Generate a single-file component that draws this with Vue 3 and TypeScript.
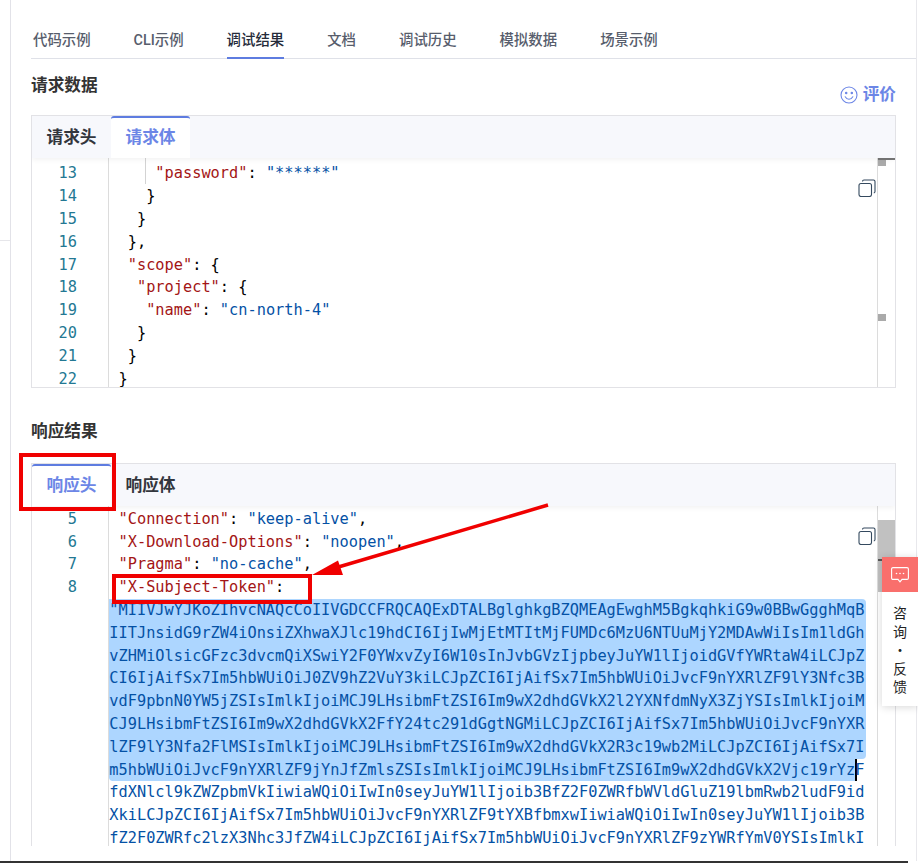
<script setup lang="ts">
interface Seg { t: string; c: string }
const mainTabs: string[] = ['代码示例', 'CLI示例', '调试结果', '文档', '调试历史', '模拟数据', '场景示例']
const seg = (t: string, c = 'p'): Seg => ({ t, c })
const reqLines: Seg[][] = [
  [seg('     '), seg('"password"', 'k'), seg(': '), seg('"******"', 'v')],
  [seg('    }')],
  [seg('   }')],
  [seg('  },')],
  [seg('  '), seg('"scope"', 'k'), seg(': {')],
  [seg('   '), seg('"project"', 'k'), seg(': {')],
  [seg('    '), seg('"name"', 'k'), seg(': '), seg('"cn-north-4"', 'v')],
  [seg('   }')],
  [seg('  }')],
  [seg(' }')]
]
const resLines: Seg[][] = [
  [seg(' '), seg('"Connection"', 'k'), seg(': '), seg('"keep-alive"', 'v'), seg(',')],
  [seg(' '), seg('"X-Download-Options"', 'k'), seg(': '), seg('"noopen"', 'v'), seg(',')],
  [seg(' '), seg('"Pragma"', 'k'), seg(': '), seg('"no-cache"', 'v'), seg(',')],
  [seg(' '), seg('"X-Subject-Token"', 'k'), seg(':')]
]
const selected: string[] = [
  '"MIIVJwYJKoZIhvcNAQcCoIIVGDCCFRQCAQExDTALBglghkgBZQMEAgEwghM5BgkqhkiG9w0BBwGgghMqB',
  'IITJnsidG9rZW4iOnsiZXhwaXJlc19hdCI6IjIwMjEtMTItMjFUMDc6MzU6NTUuMjY2MDAwWiIsIm1ldGh',
  'vZHMiOlsicGFzc3dvcmQiXSwiY2F0YWxvZyI6W10sInJvbGVzIjpbeyJuYW1lIjoidGVfYWRtaW4iLCJpZ',
  'CI6IjAifSx7Im5hbWUiOiJ0ZV9hZ2VuY3kiLCJpZCI6IjAifSx7Im5hbWUiOiJvcF9nYXRlZF9lY3Nfc3B',
  'vdF9pbnN0YW5jZSIsImlkIjoiMCJ9LHsibmFtZSI6Im9wX2dhdGVkX2l2YXNfdmNyX3ZjYSIsImlkIjoiM',
  'CJ9LHsibmFtZSI6Im9wX2dhdGVkX2FfY24tc291dGgtNGMiLCJpZCI6IjAifSx7Im5hbWUiOiJvcF9nYXR',
  'lZF9lY3Nfa2FlMSIsImlkIjoiMCJ9LHsibmFtZSI6Im9wX2dhdGVkX2R3c19wb2MiLCJpZCI6IjAifSx7I'
]
const selLast = 'm5hbWUiOiJvcF9nYXRlZF9jYnJfZmlsZSIsImlkIjoiMCJ9LHsibmFtZSI6Im9wX2dhdGVkX2Vjc19rYz'
const rest: string[] = [
  'fdXNlcl9kZWZpbmVkIiwiaWQiOiIwIn0seyJuYW1lIjoib3BfZ2F0ZWRfbWVldGluZ19lbmRwb2ludF9id',
  'XkiLCJpZCI6IjAifSx7Im5hbWUiOiJvcF9nYXRlZF9tYXBfbmxwIiwiaWQiOiIwIn0seyJuYW1lIjoib3B',
  'fZ2F0ZWRfc2lzX3Nhc3JfZW4iLCJpZCI6IjAifSx7Im5hbWUiOiJvcF9nYXRlZF9zYWRfYmV0YSIsImlkI'
]
const feedback: string[] = ['咨', '询', '•', '反', '馈']
</script>

<template>
  <div class="page">
    <div class="rail"></div>
    <main class="main">
      <nav class="tabs">
        <span v-for="(t, i) in mainTabs" :key="t" class="tab" :class="{ on: i === 2 }">{{ t }}</span>
      </nav>

      <div class="title-row first">
        <h2 class="title">请求数据</h2>
        <span class="rate">
          <svg width="18" height="18" viewBox="0 0 18 18" fill="none" stroke="#6c86e6" stroke-width="1.1">
            <circle cx="9" cy="9" r="8" />
            <circle cx="6.2" cy="7" r=".7" fill="#6c86e6" />
            <circle cx="11.8" cy="7" r=".7" fill="#6c86e6" />
            <path d="M5.2 10.8c1 1.7 2.3 2.5 3.8 2.5s2.800-.8 3.800-2.500" stroke-linecap="round" />
          </svg>
          评价
        </span>
      </div>

      <section class="panel req">
        <header class="panel-head">
          <span class="ptab">请求头</span>
          <span class="ptab on">请求体</span>
        </header>
        <div class="panel-body">
          <div class="gutter">
            <div v-for="n in 10" :key="n" class="num">{{ n + 12 }}</div>
          </div>
          <div class="code">
            <i class="guide"></i>
            <div v-for="(l, i) in reqLines" :key="i" class="line">
              <span v-for="(s, j) in l" :key="j" :class="s.c">{{ s.t }}</span>
            </div>
          </div>
          <svg class="copy" width="18" height="18" viewBox="0 0 18 18" fill="none" stroke="#34495e" stroke-width="1.1">
            <rect x="1" y="4.500" width="12.500" height="13" rx="2" />
            <path d="M4.500 2.500c0-.9.6-1.500 1.500-1.500h9.500c.9 0 1.500.6 1.500 1.500v10c0 .8-.4 1.300-1.200 1.500" />
          </svg>
          <div class="scroll">
            <i class="scroll-top"></i>
            <i class="mark m1"></i>
            <i class="mark m2"></i>
          </div>
        </div>
      </section>

      <div class="title-row second">
        <h2 class="title">响应结果</h2>
      </div>

      <section class="panel res">
        <header class="panel-head">
          <span class="ptab on">响应头</span>
          <span class="ptab">响应体</span>
        </header>
        <div class="panel-body">
          <div class="gutter">
            <div v-for="n in 4" :key="n" class="num">{{ n + 4 }}</div>
          </div>
          <div class="code">
            <div v-for="(l, i) in resLines" :key="i" class="line">
              <span v-for="(s, j) in l" :key="j" :class="s.c">{{ s.t }}</span>
            </div>
            <div
              v-for="(l, i) in selected"
              :key="l"
              class="line tok sel"
              :class="{ first: i === 0, end: i === selected.length - 1 }"
            >{{ l }}</div>
            <div class="line tok"><span class="sel-last">{{ selLast }}</span>F</div>
            <div v-for="l in rest" :key="l" class="line tok">{{ l }}</div>
          </div>
          <svg class="copy" width="18" height="18" viewBox="0 0 18 18" fill="none" stroke="#34495e" stroke-width="1.1">
            <rect x="1" y="4.500" width="12.500" height="13" rx="2" />
            <path d="M4.500 2.500c0-.9.6-1.500 1.500-1.500h9.500c.9 0 1.500.6 1.500 1.500v10c0 .8-.4 1.300-1.200 1.500" />
          </svg>
          <div class="scroll">
            <i class="thumb"></i>
            <i class="thumb-mark"></i>
          </div>
        </div>
      </section>
    </main>
    <div class="foot"></div>

    <aside class="float">
      <div class="float-icon">
        <svg width="18" height="16" viewBox="0 0 18 16" fill="none" stroke="#fff" stroke-width="1.100">
          <path d="M2 .6h14c.8 0 1.400.6 1.400 1.400v9c0 .8-.6 1.400-1.400 1.400h-5L9 14.800 7 12.400H2c-.8 0-1.400-.6-1.400-1.400V2C.6 1.200 1.200.6 2 .6z" />
          <circle cx="5.500" cy="6.500" r=".8" fill="#fff" stroke="none" />
          <circle cx="9" cy="6.500" r=".8" fill="#fff" stroke="none" />
          <circle cx="12.500" cy="6.500" r=".8" fill="#fff" stroke="none" />
        </svg>
      </div>
      <div class="float-text">
        <span v-for="(c, i) in feedback" :key="i">{{ c }}</span>
      </div>
    </aside>

    <i class="box box-a"></i>
    <i class="box box-b"></i>
    <svg class="arrow" width="918" height="863" viewBox="0 0 918 863">
      <path d="M548 505L335 568" stroke="#f00000" stroke-width="3.500" fill="none" />
      <path d="M312 575L338 560.500L343 575z" fill="#f00000" />
    </svg>
  </div>
</template>

<style>
html, body { margin: 0; background: #fff; }
</style>

<style scoped>
.page {
  position: relative;
  width: 918px;
  height: 863px;
  overflow: hidden;
  background: #fff;
  display: flex;
  flex-wrap: wrap;
  font-family: Roboto, "Noto Sans CJK SC", sans-serif;
}
.rail {
  width: 10px;
  height: 240px;
  border-bottom: 1px solid #e6e6ea;
  box-sizing: content-box;
}
.main {
  width: 907px;
  height: 861px;
  box-sizing: border-box;
  border-left: 1px solid #e2e2e8;
  border-right: 1px solid #e8e8ec;
  padding-left: 20px;
  overflow: hidden;
}
.foot {
  width: 908px;
  height: 2px;
  background: #333;
}
.tabs {
  display: flex;
  gap: 43px;
  height: 59px;
  box-sizing: border-box;
  padding-left: 2px;
  border-bottom: 1px solid #dfe1e8;
}
.tab {
  height: 59px;
  box-sizing: border-box;
  padding-top: 32px;
  font-size: 14.400px;
  line-height: 18px;
  font-weight: 500;
  color: #575d6c;
  white-space: nowrap;
}
.tab.on {
  color: #252b3a;
  border-bottom: 2px solid #5e7ce0;
}
.title-row {
  width: 865px;
  display: flex;
  justify-content: space-between;
}
.title-row.first { height: 56px; padding-top: 17px; box-sizing: border-box; }
.title-row.second { height: 75px; padding-top: 34px; box-sizing: border-box; }
.title {
  margin: 0;
  font-size: 16.700px;
  line-height: 20px;
  font-weight: 700;
  color: #333;
}
.rate {
  align-self: flex-end;
  margin-bottom: 10px;
  display: flex;
  align-items: center;
  gap: 5px;
  font-size: 16.700px;
  line-height: 20px;
  font-weight: 700;
  color: #6c86e6;
}
.panel {
  width: 865px;
  box-sizing: border-box;
  border: 1px solid #e2e2e6;
  display: flex;
  flex-direction: column;
  overflow: hidden;
}
.panel.req { height: 273px; }
.panel.res { height: 383px; border-bottom: 0; }
.panel-head {
  flex: none;
  height: 42px;
  display: flex;
  background: #f7f8fc;
  box-shadow: 0 2px 5px rgba(0, 0, 0, .05);
  position: relative;
  z-index: 1;
}
.ptab {
  width: 79px;
  box-sizing: border-box;
  text-align: center;
  font-size: 16.700px;
  line-height: 43px;
  font-weight: 700;
  color: #33363d;
}
.ptab.on {
  color: #6c86e6;
  background: #fff;
  border-top: 2px solid #5e7ce0;
  border-radius: 3px 3px 0 0;
  line-height: 40px;
}
.panel-body {
  flex: 1;
  min-height: 0;
  display: flex;
  position: relative;
  overflow: hidden;
}
.gutter {
  flex: none;
  width: 77.300px;
  box-sizing: border-box;
  border-right: 1px solid #dcdcdc;
  padding-right: 31.300px;
  text-align: right;
  font-family: "DejaVu Sans Mono", monospace;
  font-size: 15.300px;
  line-height: 22.800px;
  color: #237893;
}
.req .gutter, .req .code { padding-top: 4.400px; }
.res .gutter, .res .code { padding-top: 1.800px; }
.code {
  position: relative;
  flex: 1;
  min-width: 0;
  font-family: "DejaVu Sans Mono", monospace;
  font-size: 15.300px;
  line-height: 22.800px;
  white-space: pre;
  color: #000;
}
.line { height: 22.800px; }
.k { color: #a31515; }
.v { color: #0451a5; }
.p { color: #000; }
.tok { color: #0451a5; }
.sel {
  width: 756.700px;
  background: #add6ff;
}
.sel.first { border-radius: 0 4px 0 0; }
.sel.end { border-radius: 0 0 4px 0; }
.sel-last {
  display: inline-block;
  height: 22.800px;
  background: #add6ff;
  box-shadow: 2px 0 0 #000;
  border-radius: 0 0 0 4px;
}
.guide {
  position: absolute;
  left: 36px;
  top: 0;
  width: 1px;
  height: 26px;
  background: #d3d3d3;
}
.copy {
  position: absolute;
  left: 826px;
  top: 21px;
}
.scroll {
  flex: none;
  width: 18px;
  box-sizing: border-box;
  border-left: 1px solid #dcdcdc;
  position: relative;
}
.scroll-top {
  position: absolute;
  left: 0;
  right: 0;
  top: 0;
  height: 2px;
  background: #777;
}
.mark {
  position: absolute;
  left: 0;
  width: 8px;
  background: #aaa;
}
.m1 { top: 2px; height: 6px; }
.m2 { top: 156px; height: 7px; }
.thumb {
  position: absolute;
  left: 0;
  right: 0;
  top: 14px;
  height: 72px;
  background: #c1c1c1;
}
.thumb-mark {
  position: absolute;
  left: 0;
  top: 53px;
  width: 5px;
  height: 2px;
  background: #555;
}
.float {
  position: absolute;
  left: 882px;
  top: 557px;
  width: 36px;
  height: 149px;
  background: #fff;
  box-shadow: 0 1px 8px rgba(0, 0, 0, .16);
  z-index: 3;
}
.float-icon {
  height: 35px;
  background: #f96f6c;
  display: flex;
  align-items: center;
  justify-content: center;
}
.float-text {
  display: flex;
  flex-direction: column;
  align-items: center;
  padding-top: 11px;
  font-family: "Noto Sans CJK SC", sans-serif;
  font-size: 14px;
  line-height: 18.500px;
  color: #222;
}
.box {
  position: absolute;
  border: 4px solid #f00000;
  box-sizing: border-box;
  z-index: 4;
}
.box-a { left: 19px; top: 453px; width: 97px; height: 58px; }
.box-b { left: 112px; top: 574px; width: 200px; height: 30px; }
.arrow {
  position: absolute;
  left: 0;
  top: 0;
  z-index: 4;
  pointer-events: none;
}
</style>
